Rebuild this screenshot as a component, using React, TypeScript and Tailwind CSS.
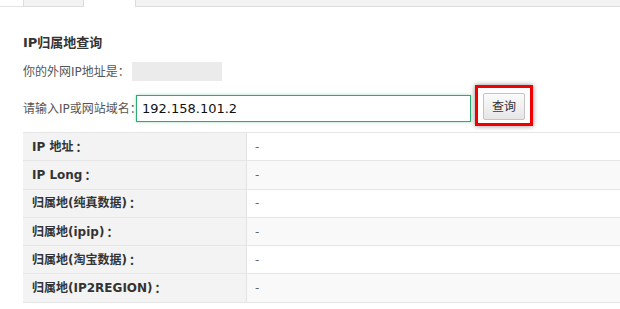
import React from 'react';

const rows = [
  { label: 'IP 地址', value: '-' },
  { label: 'IP Long', value: '-' },
  { label: '归属地(纯真数据)', value: '-' },
  { label: '归属地(ipip)', value: '-' },
  { label: '归属地(淘宝数据)', value: '-' },
  { label: '归属地(IP2REGION)', value: '-' },
];

const font = "font-['DejaVu_Sans','Noto_Sans_CJK_SC',sans-serif]";
const cjk = "font-['Noto_Sans_CJK_SC',sans-serif]";

export default function App() {
  return (
    <div className={`w-[620px] h-[309px] overflow-hidden bg-white text-[#444] ${font}`}>
      {/* Tabs (cut off at the top) */}
      <div className="flex h-[7px]">
        <div className="w-[23px] border-b border-[#e3e3e3]" />
        <div className="w-[61px] bg-[#f3f3f3] border border-t-0 border-[#dcdcdc]" />
        <div className="w-[51px]" />
        <div className="flex-1 bg-[#f3f3f3] border border-t-0 border-r-0 border-[#dcdcdc]" />
      </div>

      <div className="pl-[23px]">
        <h2 className="mt-[26px] text-[13px] leading-[20px] font-bold text-[#333]">IP归属地查询</h2>

        {/* Own IP */}
        <div className="mt-[9px] flex items-center h-[19px] text-[12px] text-[#555]">
          <span className="w-[109px] whitespace-nowrap">
            你的外网IP地址是<span className={cjk}>：</span>
          </span>
          <div className="w-[90px] h-[19px] bg-[#ebebeb]" />
        </div>

        {/* Query form */}
        <div className="mt-[4px] flex items-start">
          <span className="mt-[14px] w-[113px] whitespace-nowrap text-[12px] leading-[18px] text-[#555]">
            请输入IP或网站域名<span className={cjk}>：</span>
          </span>
          <input
            type="text"
            defaultValue="192.158.101.2"
            className="mt-[10px] w-[335px] h-[27px] px-[5px] text-[13px] text-[#111] border border-[#2eab74] shadow-[0_0_3px_rgba(46,171,116,0.45)] outline-none"
          />
          <div className="ml-[4px] w-[58px] h-[41px] border-[3px] border-[#f00000] shadow-[0_0_5px_rgba(0,0,0,0.45)] pl-[5px] pt-[5px]">
            <button className="w-[42px] h-[27px] text-[12px] text-[#333] border border-[#c4c4c4] rounded-[2px] bg-gradient-to-b from-[#fbfbfb] to-[#e6e6e6]">
              查询
            </button>
          </div>
        </div>

        {/* Result table */}
        <div className="mt-[6px] w-[640px] border-t border-[#e6e6e6]">
          {rows.map((r, i) => (
            <div key={r.label} className="flex h-[28.3px] border-b border-[#e6e6e6]">
              <div className="w-[224px] bg-[#f3f3f3] border-r border-[#e3e3e3] pl-[9px] flex items-center text-[12px] font-bold text-[#333] whitespace-nowrap">
                {r.label}
                <span className={`${cjk} ml-[2px]`}>：</span>
              </div>
              <div
                className={`flex-1 pl-[8px] flex items-center text-[12px] text-[#666] ${
                  i % 2 === 1 ? 'bg-[#f9f9f9]' : 'bg-white'
                }`}
              >
                {r.value}
              </div>
            </div>
          ))}
        </div>
      </div>
    </div>
  );
}
